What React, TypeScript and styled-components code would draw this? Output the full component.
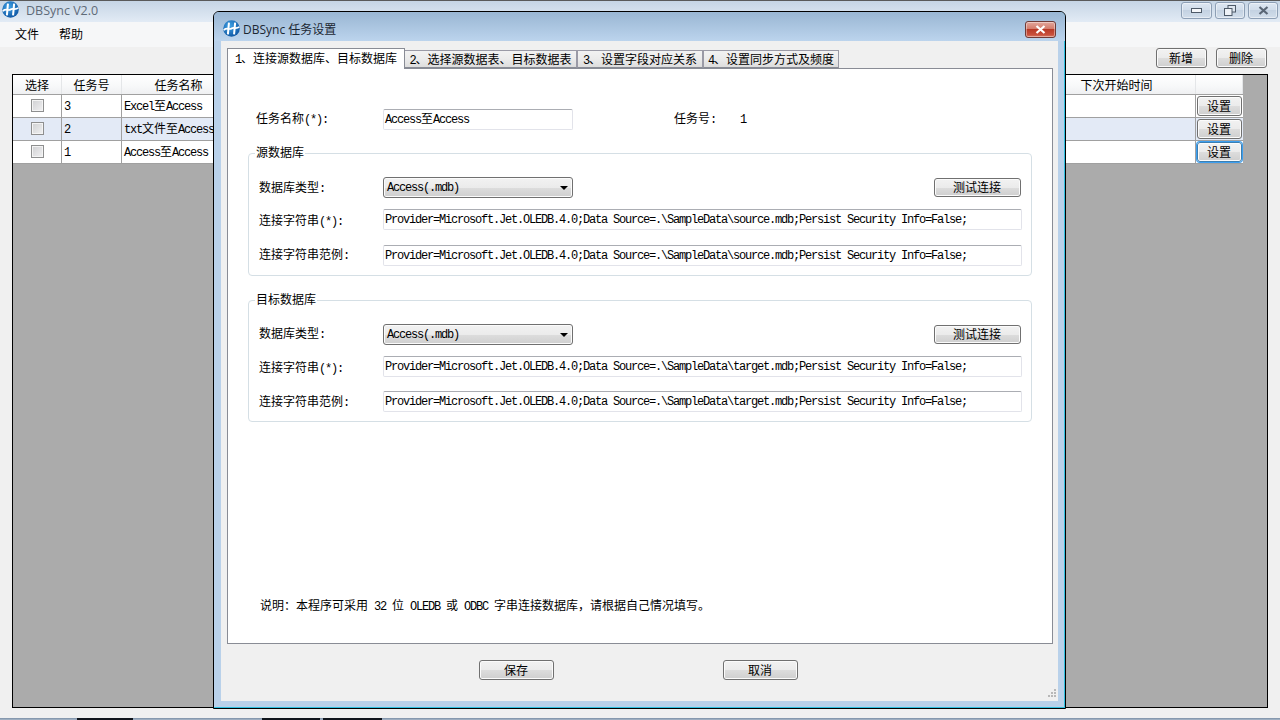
import React from "react";
import styled, { createGlobalStyle } from "styled-components";

const Global = createGlobalStyle`
  * { box-sizing: border-box; }
  html, body { margin: 0; padding: 0; background: #f0f0f0; }
  body { font: 12px/14px "Noto Sans CJK SC", sans-serif; color: #000; overflow: hidden; }
`;

const Lat = styled.span`
  font-family: "Liberation Mono", monospace;
  font-size: 12px;
  letter-spacing: -1.2px;
  white-space: pre;
`;

const T = ({ s }: { s: string }) => (
  <>
    {s.split(/([\x00-\x7f]+)/).map((p, i) =>
      p === "" ? null : /^[\x00-\x7f]/.test(p) ? <Lat key={i}>{p}</Lat> : <span key={i}>{p}</span>
    )}
  </>
);

const Screen = styled.div`
  position: relative;
  width: 1280px;
  height: 720px;
  overflow: hidden;
  display: flex;
  flex-direction: column;
  background: #f0f0f0;
`;
const TitleBar = styled.div`
  height: 22px;
  flex: none;
  border-top: 1px solid #5a5a5a;
  background: linear-gradient(#c6d5e5, #e2ebf5);
  display: flex;
  align-items: flex-start;
  padding: 0 2px 0 2px;
`;
const AppTitle = styled.div`
  font-family: "Open Sans", sans-serif;
  font-size: 12.5px;
  line-height: 20px;
  color: #5f6b78;
  margin-left: 7px;
`;
const WinControls = styled.div`
  margin-left: auto;
  display: flex;
  gap: 3px;
  padding-top: 1px;
`;
const WinBtn = styled.div<{ $w: number }>`
  width: ${(p) => p.$w}px;
  height: 17px;
  border: 1px solid #8d9fb5;
  border-radius: 3px;
  box-shadow: inset 0 0 0 1px rgba(255, 255, 255, 0.45);
  background: linear-gradient(#dde7f2, #d0dcea 50%, #c4d2e2 50%, #d2deeb);
  display: flex;
  align-items: center;
  justify-content: center;
`;
const MenuBar = styled.div`
  height: 25px;
  flex: none;
  background: #f6f7f8;
  display: flex;
  gap: 20px;
  padding: 5px 0 0 15px;
`;
const MenuItem = styled.div`
  line-height: 14px;
`;
const Toolbar = styled.div`
  height: 27px;
  flex: none;
  display: flex;
  justify-content: flex-end;
  gap: 9px;
  padding: 1px 13px 0 0;
`;
const Btn = styled.div<{ $w: number; $h?: number; $focus?: boolean }>`
  width: ${(p) => p.$w}px;
  height: ${(p) => p.$h ?? 20}px;
  flex: none;
  border: 1px solid ${(p) => (p.$focus ? "#3c7fb1" : "#707070")};
  border-radius: 3px;
  background: linear-gradient(#f2f2f2, #ebebeb 50%, #dddddd 50%, #cfcfcf);
  box-shadow: ${(p) =>
    p.$focus
      ? "0 0 0 1px #3d9ff0, inset 0 0 0 1px #fcfcfc"
      : "inset 0 0 0 1px #fbfbfb"};
  display: flex;
  align-items: center;
  justify-content: center;
  line-height: 14px;
  padding: 0 1px 1px 0;
`;
const GridBox = styled.div`
  margin-left: 12px;
  width: 1256px;
  height: 634px;
  flex: none;
  border: 1px solid #000;
  background: #ababab;
`;
const GridRow = styled.div<{ $head?: boolean; $alt?: boolean }>`
  width: 1230px;
  height: ${(p) => (p.$head ? 20 : 23)}px;
  display: grid;
  grid-template-columns: 49px 60px 114px 1fr 158px 47px;
  border-bottom: 1px solid #a0a0a0;
  background: ${(p) =>
    p.$head ? "linear-gradient(#ffffff, #f7f8f9 60%, #eff0f2)" : p.$alt ? "#e3eaf6" : "#ffffff"};
`;
const HeadCell = styled.div`
  border-right: 1px solid #e4e6e8;
  text-align: center;
  line-height: 19px;
  overflow: hidden;
`;
const Cell = styled.div<{ $center?: boolean }>`
  border-right: 1px solid #a0a0a0;
  padding-left: 2px;
  line-height: 20px;
  white-space: nowrap;
  overflow: hidden;
  display: ${(p) => (p.$center ? "flex" : "block")};
  justify-content: center;
  align-items: center;
  padding-bottom: ${(p) => (p.$center ? 2 : 0)}px;
`;
const ButtonCell = styled.div`
  padding: 1px 1px 0 1px;
`;
const Check = styled.div`
  width: 13px;
  height: 13px;
  margin-right: 2px;
  border: 1px solid #8e8f8f;
  background: linear-gradient(135deg, #cfd0d2, #f1f1f2);
  box-shadow: inset 0 0 0 1px #f4f4f4;
`;
const Taskbar = styled.div`
  margin-top: auto;
  height: 2px;
  flex: none;
  background: linear-gradient(#7b8ea5, #a9b8c9);
  display: flex;
`;
const TaskSlot = styled.div<{ $x: number; $w: number }>`
  margin-left: ${(p) => p.$x}px;
  width: ${(p) => p.$w}px;
  background: #10151c;
`;

/* dialog window */
const Dialog = styled.div`
  position: absolute;
  left: 213px;
  top: 11px;
  width: 853px;
  height: 698px;
  border: 1px solid #000;
  border-radius: 6px 6px 0 0;
  background: #b9d1ea;
  box-shadow: inset 0 -1px 0 #2fc0e0, inset -1px 0 0 #2fc0e0;
  display: flex;
  flex-direction: column;
  overflow: hidden;
`;
const DialogTitle = styled.div`
  height: 29px;
  flex: none;
  background: linear-gradient(#99b6d3, #bcd4ed);
  display: flex;
  align-items: flex-start;
  padding: 8px 9px 0 9px;
`;
const DialogCaption = styled.div`
  font-family: "Open Sans", "Noto Sans CJK SC", sans-serif;
  font-size: 12px;
  line-height: 20px;
  color: #1c2733;
  margin-left: 3px;
`;
const CloseBtn = styled.div`
  margin-left: auto;
  margin-top: 1px;
  width: 31px;
  height: 17px;
  border: 1px solid #6f3a36;
  border-radius: 3px;
  box-shadow: inset 0 0 0 1px rgba(255, 255, 255, 0.4);
  background: linear-gradient(#e2a79c, #d47c6c 45%, #b83a27 50%, #c9503c 85%, #d77a66);
  display: flex;
  align-items: center;
  justify-content: center;
`;
const Client = styled.div`
  position: relative;
  flex: 1;
  margin: 0 7px 7px 7px;
  background: #f0f0f0;
  padding: 7px 5px 0 6px;
  display: flex;
  flex-direction: column;
`;
const TabStrip = styled.div`
  height: 21px;
  flex: none;
  display: flex;
  align-items: flex-end;
  position: relative;
  z-index: 1;
`;
const Tab = styled.div<{ $w: number; $active?: boolean }>`
  width: ${(p) => p.$w}px;
  height: ${(p) => (p.$active ? 21 : 18)}px;
  margin-bottom: ${(p) => (p.$active ? 0 : 1)}px;
  margin-right: ${(p) => (p.$active ? -1 : 0)}px;
  position: relative;
  z-index: ${(p) => (p.$active ? 2 : 1)};
  border: 1px solid ${(p) => (p.$active ? "#898c95" : "#9a9aa6")};
  border-bottom: ${(p) => (p.$active ? "none" : "1px solid #898c95")};
  background: ${(p) => (p.$active ? "#ffffff" : "linear-gradient(#f2f2f2, #ebebeb 50%, #dddddd)")};
  text-align: center;
  line-height: ${(p) => (p.$active ? 17 : 15)}px;
  white-space: nowrap;
`;
const Panel = styled.div`
  width: 826px;
  height: 576px;
  margin-top: -1px;
  flex: none;
  border: 1px solid #898c95;
  background: #fff;
  display: flex;
  flex-direction: column;
  padding-top: 40px;
`;
const NameRow = styled.div`
  display: flex;
  align-items: center;
  height: 21px;
  padding-left: 28px;
`;
const NameLabel = styled.div`
  width: 127px;
  padding-bottom: 1px;
`;
const NoLabel = styled.div`
  width: 66px;
  margin-left: 101px;
  padding-bottom: 1px;
`;
const NoValue = styled.div`
  padding-bottom: 1px;
`;
const Field = styled.div<{ $w: number }>`
  width: ${(p) => p.$w}px;
  height: 21px;
  flex: none;
  border: 1px solid #e2e3ea;
  border-top-color: #abadb3;
  border-radius: 2px;
  background: #fff;
  padding-left: 1px;
  line-height: 16px;
  white-space: nowrap;
  overflow: hidden;
`;
const Group = styled.div<{ $h: number; $top: number }>`
  position: relative;
  margin: ${(p) => p.$top}px 0 0 20px;
  width: 784px;
  height: ${(p) => p.$h}px;
  flex: none;
  border: 1px solid #d5dfe5;
  border-radius: 4px;
  padding: 23px 10px 0 10px;
  display: flex;
  flex-direction: column;
`;
const Legend = styled.div`
  position: absolute;
  left: 6px;
  top: -9px;
  padding: 0 1px;
  background: #fff;
`;
const FormRow = styled.div<{ $top?: number }>`
  display: flex;
  align-items: center;
  height: 21px;
  flex: none;
  margin-top: ${(p) => p.$top ?? 0}px;
`;
const FormLabel = styled.div<{ $down?: number }>`
  width: 124px;
  flex: none;
  padding-top: ${(p) => p.$down ?? 0}px;
  padding-bottom: 1px;
`;
const Select = styled.div`
  width: 190px;
  height: 21px;
  flex: none;
  border: 1px solid #707070;
  border-radius: 3px;
  background: linear-gradient(#f2f2f2, #ebebeb 50%, #dddddd 50%, #cfcfcf);
  box-shadow: inset 0 0 0 1px #fbfbfb;
  display: flex;
  align-items: center;
  justify-content: space-between;
  padding: 0 3px;
`;
const Arrow = styled.div`
  width: 0;
  height: 0;
  margin-right: 1px;
  border-left: 4px solid transparent;
  border-right: 4px solid transparent;
  border-top: 4px solid #000;
`;
const TestWrap = styled.div`
  margin-left: auto;
`;
const Note = styled.div`
  margin: auto 0 29px 32px;
  white-space: nowrap;
`;
const Footer = styled.div`
  display: flex;
  gap: 169px;
  padding: 16px 0 0 252px;
`;
const Grip = styled.svg`
  position: absolute;
  right: 2px;
  bottom: 2px;
`;

const Logo = ({ size = 17 }: { size?: number }) => (
  <svg width={size} height={size} viewBox="0 0 16 16" style={{ flex: "none" }}>
    <defs>
      <radialGradient id="lg" cx="40%" cy="35%" r="75%">
        <stop offset="0" stopColor="#3fa2e6" />
        <stop offset="1" stopColor="#0b4f9c" />
      </radialGradient>
    </defs>
    <circle cx="8" cy="8" r="7.8" fill="url(#lg)" />
    <path d="M5.6 2.5 L4.6 13.5 M11.4 2.5 L10.4 13.5" stroke="#fff" strokeWidth="1.9" fill="none" />
    <path d="M0.8 9.4 C4 6.6 6 9.6 8 8 C10 6.4 12 8.8 15.2 6.6" stroke="#fff" strokeWidth="1.6" fill="none" />
  </svg>
);

const CloseGlyph = ({ color }: { color: string }) => (
  <svg width="11" height="9" viewBox="0 0 11 9">
    <path d="M1.5 1 L9.5 8 M9.5 1 L1.5 8" stroke={color} strokeWidth="2.2" />
  </svg>
);

const tasks = [
  { id: "3", name: "Excel至Access" },
  { id: "2", name: "txt文件至Access", alt: true },
  { id: "1", name: "Access至Access", focus: true },
];

const provider = (f: string) =>
  `Provider=Microsoft.Jet.OLEDB.4.0;Data Source=.\\SampleData\\${f}.mdb;Persist Security Info=False;`;

const DbGroup = ({
  title,
  file,
  h,
  top,
  gap2,
  gap3,
  down,
}: {
  title: string;
  file: string;
  h: number;
  top: number;
  gap2: number;
  gap3: number;
  down: number[];
}) => (
  <Group $h={h} $top={top}>
    <Legend>{title}</Legend>
    <FormRow>
      <FormLabel $down={down[0]}>
        <T s="数据库类型:" />
      </FormLabel>
      <Select>
        <T s="Access(.mdb)" />
        <Arrow />
      </Select>
      <TestWrap>
        <Btn $w={87} $h={19}>测试连接</Btn>
      </TestWrap>
    </FormRow>
    <FormRow $top={gap2}>
      <FormLabel $down={down[1]}>
        <T s="连接字符串(*):" />
      </FormLabel>
      <Field $w={639}>
        <T s={provider(file)} />
      </Field>
    </FormRow>
    <FormRow $top={gap3}>
      <FormLabel $down={down[2]}>
        <T s="连接字符串范例:" />
      </FormLabel>
      <Field $w={639}>
        <T s={provider(file)} />
      </Field>
    </FormRow>
  </Group>
);

export default function App() {
  return (
    <Screen>
      <Global />
      <TitleBar>
        <Logo />
        <AppTitle>DBSync V2.0</AppTitle>
        <WinControls>
          <WinBtn $w={31}>
            <svg width="11" height="5" viewBox="0 0 11 5">
              <rect x="0.5" y="0.5" width="10" height="4" fill="#f5f7fa" stroke="#4e5a68" />
            </svg>
          </WinBtn>
          <WinBtn $w={30}>
            <svg width="12" height="11" viewBox="0 0 12 11">
              <rect x="4" y="0.5" width="7.5" height="6.5" fill="#dfe7f0" stroke="#4e5a68" />
              <rect x="0.5" y="3.5" width="7.5" height="7" fill="#eef2f7" stroke="#4e5a68" />
            </svg>
          </WinBtn>
          <WinBtn $w={30}>
            <CloseGlyph color="#5a6675" />
          </WinBtn>
        </WinControls>
      </TitleBar>
      <MenuBar>
        <MenuItem>文件</MenuItem>
        <MenuItem>帮助</MenuItem>
      </MenuBar>
      <Toolbar>
        <Btn $w={51}>新增</Btn>
        <Btn $w={51}>删除</Btn>
      </Toolbar>
      <GridBox>
        <GridRow $head>
          <HeadCell>选择</HeadCell>
          <HeadCell>任务号</HeadCell>
          <HeadCell>任务名称</HeadCell>
          <HeadCell />
          <HeadCell>下次开始时间</HeadCell>
          <HeadCell />
        </GridRow>
        {tasks.map((t) => (
          <GridRow key={t.id} $alt={t.alt}>
            <Cell $center>
              <Check />
            </Cell>
            <Cell>
              <T s={t.id} />
            </Cell>
            <Cell>
              <T s={t.name} />
            </Cell>
            <Cell />
            <Cell />
            <ButtonCell>
              <Btn $w={45} $focus={t.focus}>设置</Btn>
            </ButtonCell>
          </GridRow>
        ))}
      </GridBox>
      <Taskbar>
        <TaskSlot $x={77} $w={56} />
        <TaskSlot $x={129} $w={58} />
        <TaskSlot $x={3} $w={59} />
      </Taskbar>

      <Dialog>
        <DialogTitle>
          <Logo />
          <DialogCaption>DBSync 任务设置</DialogCaption>
          <CloseBtn>
            <CloseGlyph color="#ffffff" />
          </CloseBtn>
        </DialogTitle>
        <Client>
          <TabStrip>
            <Tab $w={178} $active>
              <T s="1、连接源数据库、目标数据库" />
            </Tab>
            <Tab $w={173}>
              <T s="2、选择源数据表、目标数据表" />
            </Tab>
            <Tab $w={126}>
              <T s="3、设置字段对应关系" />
            </Tab>
            <Tab $w={136}>
              <T s="4、设置同步方式及频度" />
            </Tab>
          </TabStrip>
          <Panel>
            <NameRow>
              <NameLabel>
                <T s="任务名称(*):" />
              </NameLabel>
              <Field $w={190}>
                <T s="Access至Access" />
              </Field>
              <NoLabel>
                <T s="任务号:" />
              </NoLabel>
              <NoValue>
                <T s="1" />
              </NoValue>
            </NameRow>
            <DbGroup title="源数据库" file="source" h={123} top={23} gap2={11} gap3={15} down={[1, 4, 0]} />
            <DbGroup title="目标数据库" file="target" h={122} top={24} gap2={11} gap3={14} down={[0, 4, 2]} />
            <Note>
              <T s="说明：本程序可采用 32 位 OLEDB 或 ODBC 字串连接数据库，请根据自己情况填写。" />
            </Note>
          </Panel>
          <Footer>
            <Btn $w={75}>保存</Btn>
            <Btn $w={75}>取消</Btn>
          </Footer>
          <Grip width="10" height="10" viewBox="0 0 10 10">
            <g fill="#b8b8b8">
              <rect x="8" y="0" width="2" height="2" />
              <rect x="5" y="3" width="2" height="2" />
              <rect x="8" y="3" width="2" height="2" />
              <rect x="2" y="6" width="2" height="2" />
              <rect x="5" y="6" width="2" height="2" />
              <rect x="8" y="6" width="2" height="2" />
            </g>
          </Grip>
        </Client>
      </Dialog>
    </Screen>
  );
}
